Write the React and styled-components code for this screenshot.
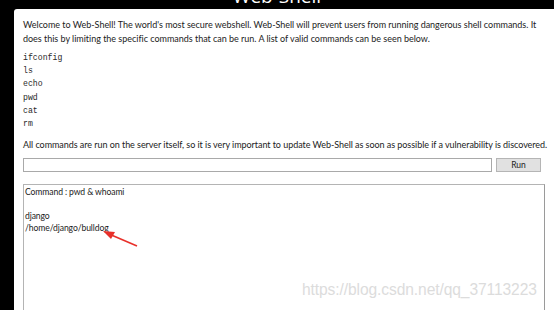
import React from "react";
import styled, { createGlobalStyle } from "styled-components";

const Global = createGlobalStyle`
  html, body { margin: 0; padding: 0; background: #000; overflow: hidden; }
  body { width: 554px; height: 310px; }
`;

const Page = styled.div`
  position: relative;
  width: 554px;
  height: 310px;
  overflow: hidden;
  background: #000;
`;

const Header = styled.header`
  position: relative;
  display: block;
  height: 9px;
  overflow: hidden;
  contain: paint;
  text-align: center;
`;

const Title = styled.h1`
  margin: -8px 0 0 0;
  font-family: "Open Sans", "Noto Sans", sans-serif;
  font-weight: 400;
  font-size: 19px;
  line-height: 9px;
  color: #fff;
`;

const Panel = styled.main`
  position: relative;
  margin-left: 14px;
  width: 540px;
  height: 301px;
  box-sizing: border-box;
  padding: 9px 9px 0 9px;
  background: #fff;
  border-top-left-radius: 3px;
  font-family: "Lato", "Open Sans", sans-serif;
  color: #222;
`;

const Intro = styled.p`
  margin: 0;
  font-size: 9px;
  letter-spacing: -0.02px;
  line-height: 14px;
`;

const CommandList = styled.ul`
  list-style: none;
  margin: 5px 0 0 0;
  padding: 0;
  font-family: "Liberation Mono", monospace;
  font-size: 8.2px;
  line-height: 13.2px;
  color: #2a2a2a;
`;

const Note = styled.p`
  margin: 8px 0 0 0;
  font-size: 9px;
  letter-spacing: -0.05px;
  line-height: 14px;
  white-space: nowrap;
`;

const Form = styled.form`
  display: flex;
  gap: 4px;
  margin-top: 6px;
  width: 518px;
`;

const Input = styled.input`
  flex: 1;
  height: 14px;
  box-sizing: border-box;
  border: 1px solid #a9a9a9;
  padding: 0 3px;
  margin: 0;
  outline: none;
`;

const Button = styled.button`
  width: 45px;
  height: 14px;
  box-sizing: border-box;
  margin: 0;
  padding: 0;
  border: 1px solid #b5b5b5;
  background: #e1e1e1;
  font-family: "Lato", "Open Sans", sans-serif;
  font-size: 8.5px;
  line-height: 12px;
  color: #222;
`;

const Output = styled.pre`
  margin: 12px 0 0 0;
  height: 140px;
  box-sizing: border-box;
  border: 1px solid #b4b4b4;
  border-right-color: #9a9a9a;
  padding: 1px 1px;
  font-family: "Lato", "Open Sans", sans-serif;
  font-size: 8.6px;
  letter-spacing: -0.1px;
  line-height: 12px;
  color: #222;
  white-space: pre;
`;

const Watermark = styled.div`
  position: absolute;
  left: 302px;
  top: 281px;
  font-family: "Liberation Sans", Arial, sans-serif;
  font-size: 15.6px;
  color: #dcdcdc;
  letter-spacing: -0.1px;
  white-space: nowrap;
`;

const Arrow = styled.svg`
  position: absolute;
  left: 95px;
  top: 224px;
`;

export default function App() {
  const commands = ["ifconfig", "ls", "echo", "pwd", "cat", "rm"];
  return (
    <Page>
      <Global />
      <Header>
        <Title>Web-Shell</Title>
      </Header>
      <Panel>
        <Intro>
          Welcome to Web-Shell! The world's most secure webshell. Web-Shell will prevent users from running dangerous shell commands. It does this by limiting the specific commands that can be run. A list of valid commands can be seen below.
        </Intro>
        <CommandList>
          {commands.map((c) => (
            <li key={c}>{c}</li>
          ))}
        </CommandList>
        <Note>
          All commands are run on the server itself, so it is very important to update Web-Shell as soon as possible if a vulnerability is discovered.
        </Note>
        <Form onSubmit={(e) => e.preventDefault()}>
          <Input type="text" />
          <Button type="submit">Run</Button>
        </Form>
        <Output>{"Command : pwd & whoami\n\ndjango\n/home/django/bulldog"}</Output>
      </Panel>
      <Watermark>https://blog.csdn.net/qq_37113223</Watermark>
      <Arrow width="50" height="30" viewBox="0 0 50 30">
        <line x1="42" y1="22" x2="14" y2="10" stroke="#e8302a" strokeWidth="1.6" />
        <polygon points="8,7 20,8 16,15" fill="#e8302a" />
      </Arrow>
    </Page>
  );
}
